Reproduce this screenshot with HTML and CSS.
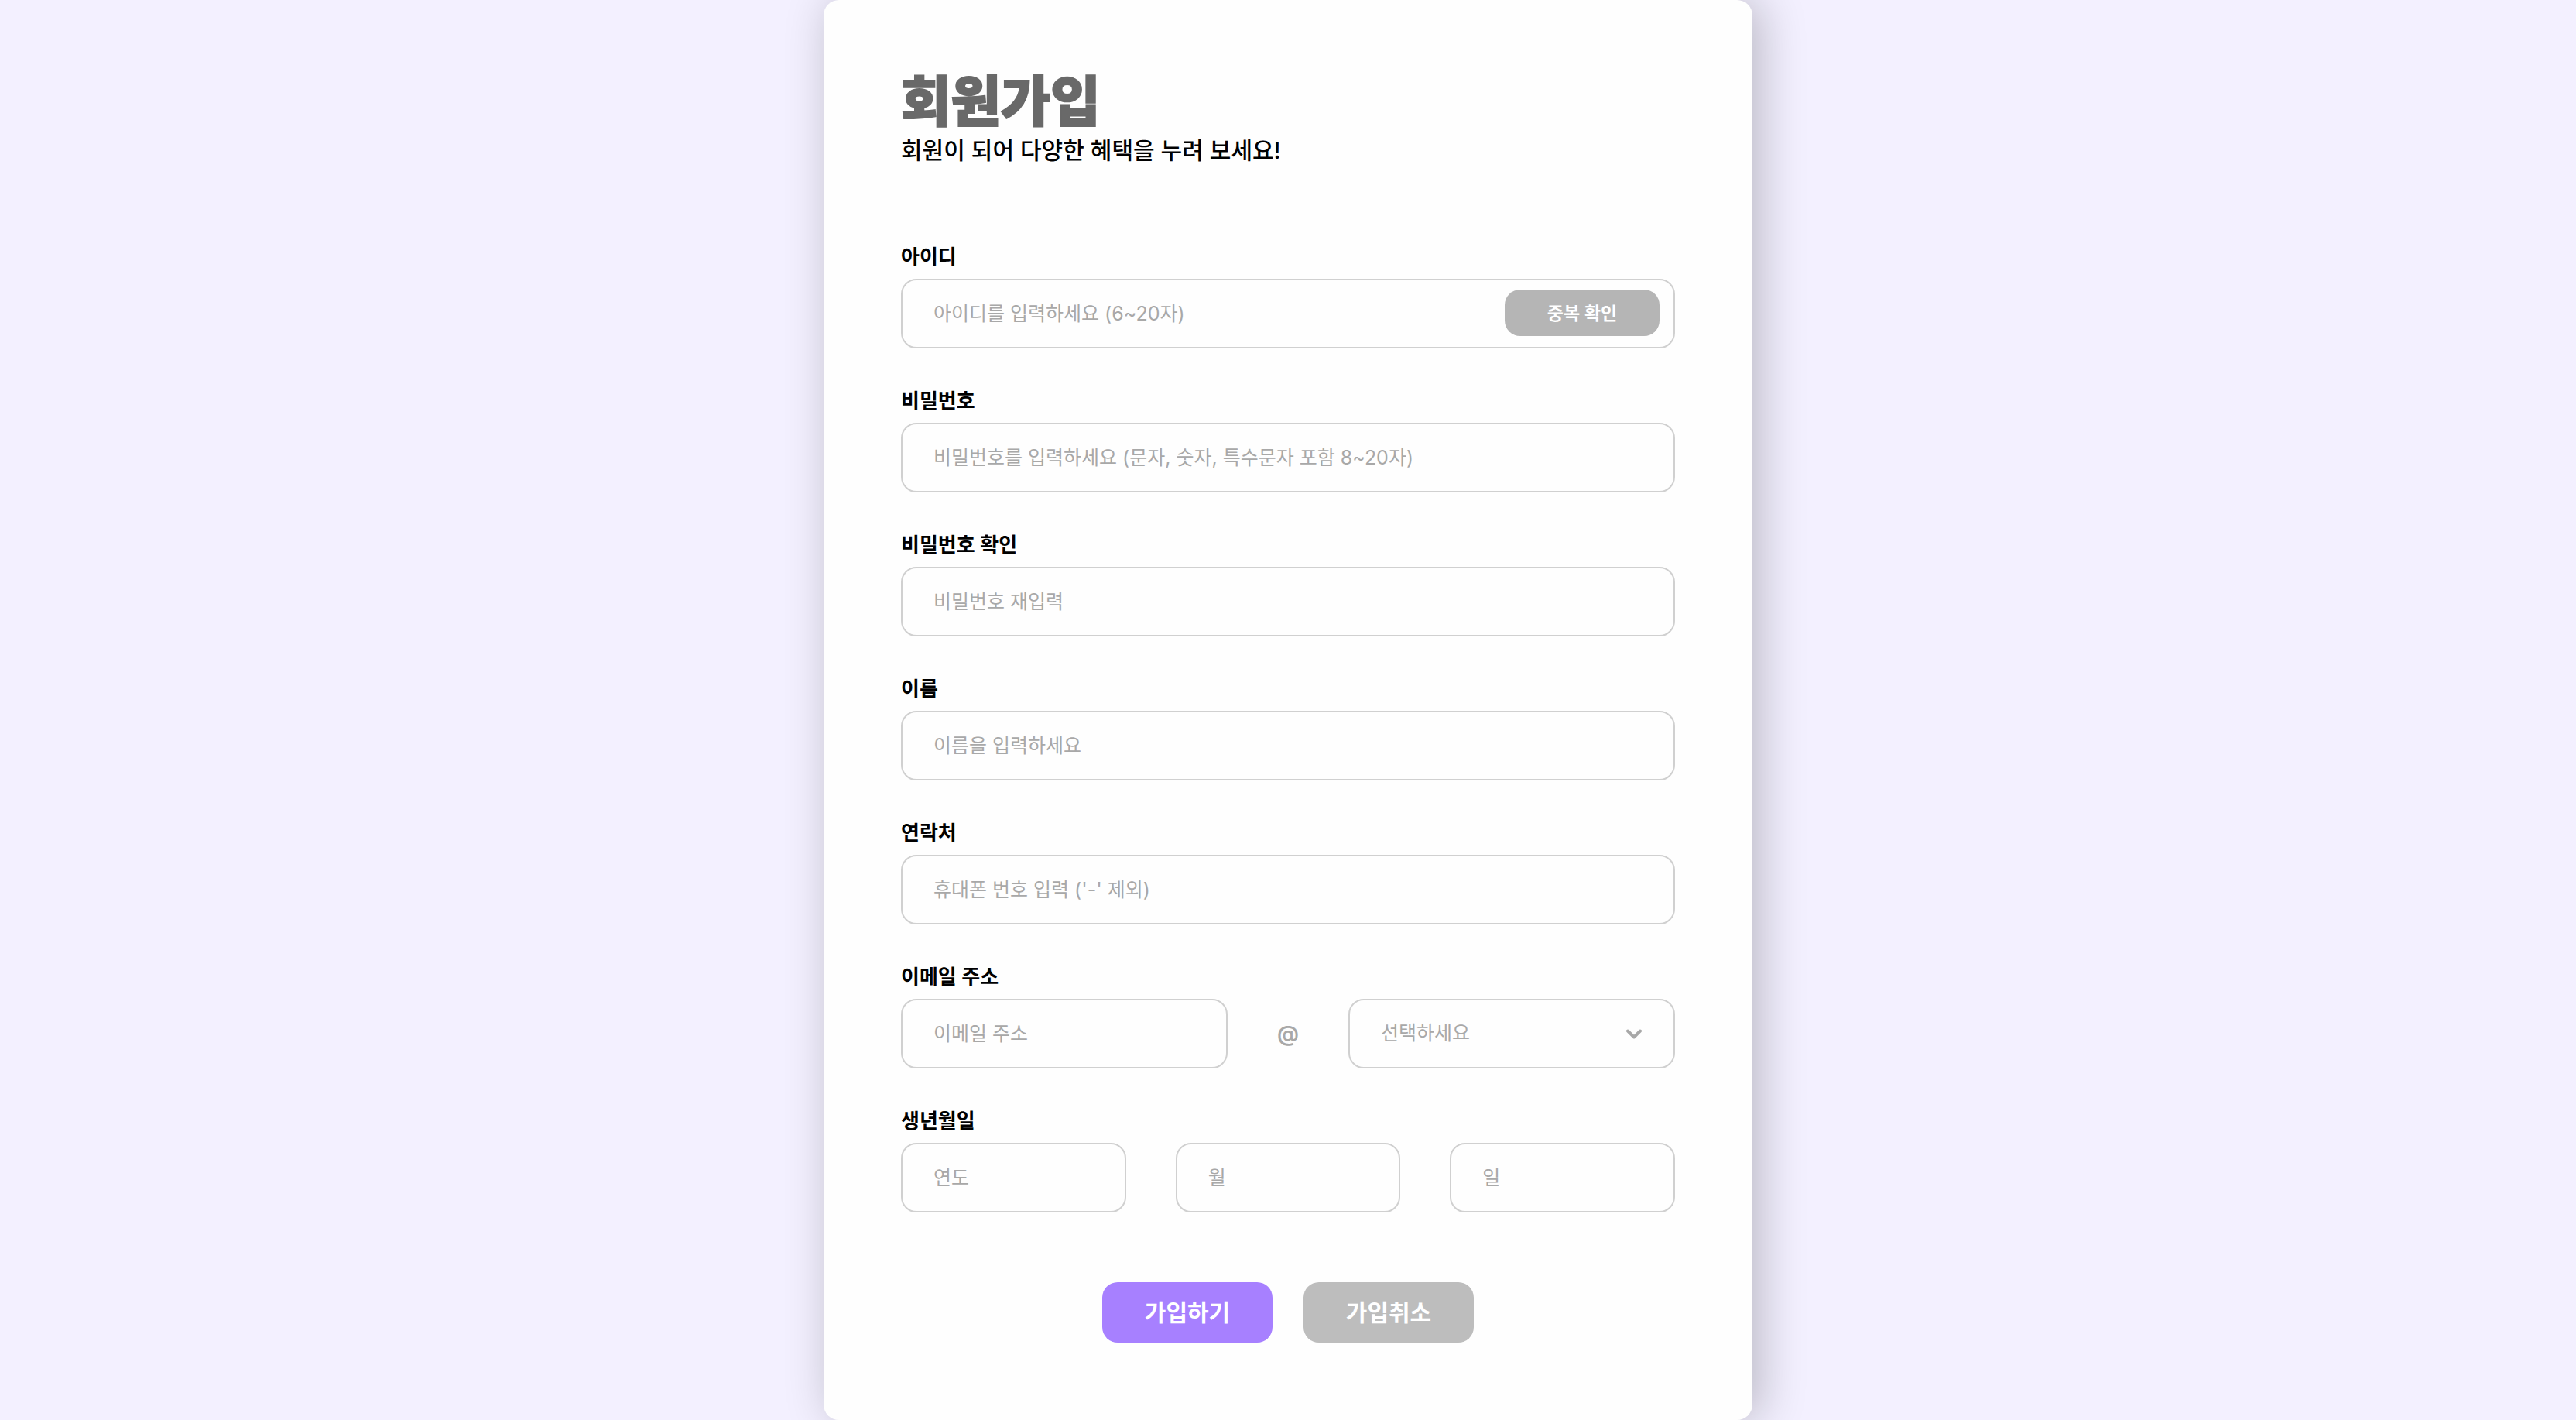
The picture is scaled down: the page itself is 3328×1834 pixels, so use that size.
FILE: index.html
```html
<!DOCTYPE html>
<html lang="ko">
<head>
<meta charset="UTF-8">
<meta name="viewport" content="width=device-width, initial-scale=1">
<title>회원가입</title>
<link rel="stylesheet" href="styles.css">
</head>
<body>
<main class="card">
  <header class="intro">
    <h1 class="title">회원가입</h1>
    <p class="subtitle">회원이 되어 다양한 혜택을 누려 보세요!</p>
  </header>
  <form class="form">
    <div class="field">
      <label class="label" for="user-id">아이디</label>
      <div class="control">
        <input class="input input-with-button" id="user-id" type="text" placeholder="아이디를 입력하세요 (6~20자)">
        <button class="check-button" type="button">중복 확인</button>
      </div>
    </div>
    <div class="field">
      <label class="label" for="password">비밀번호</label>
      <input class="input" id="password" type="password" placeholder="비밀번호를 입력하세요 (문자, 숫자, 특수문자 포함 8~20자)">
    </div>
    <div class="field">
      <label class="label" for="password-confirm">비밀번호 확인</label>
      <input class="input" id="password-confirm" type="password" placeholder="비밀번호 재입력">
    </div>
    <div class="field">
      <label class="label" for="name">이름</label>
      <input class="input" id="name" type="text" placeholder="이름을 입력하세요">
    </div>
    <div class="field">
      <label class="label" for="phone">연락처</label>
      <input class="input" id="phone" type="tel" placeholder="휴대폰 번호 입력 ('-' 제외)">
    </div>
    <div class="field">
      <label class="label" for="email">이메일 주소</label>
      <div class="email-row">
        <input class="input" id="email" type="text" placeholder="이메일 주소">
        <span class="at">@</span>
        <div class="control">
          <select class="input select" aria-label="이메일 도메인">
            <option>선택하세요</option>
          </select>
          <svg class="chevron" viewBox="0 0 20 14" aria-hidden="true"><path d="M2 2.5 10 10.5 18 2.5"/></svg>
        </div>
      </div>
    </div>
    <div class="field">
      <label class="label" for="year">생년월일</label>
      <div class="birth-row">
        <input class="input" id="year" type="text" placeholder="연도">
        <input class="input" type="text" placeholder="월" aria-label="월">
        <input class="input" type="text" placeholder="일" aria-label="일">
      </div>
    </div>
    <div class="actions">
      <button class="button button-primary" type="submit">가입하기</button>
      <button class="button button-cancel" type="button">가입취소</button>
    </div>
  </form>
</main>
</body>
</html>
```
FILE: styles.css
```css
* {
  box-sizing: border-box;
}

body {
  margin: 0;
  background: #f3f0ff;
  color: #000;
  font-family: "Inter", "Noto Sans CJK KR", sans-serif;
}

.card {
  max-width: 1200px;
  margin: 0 auto;
  padding: 92px 100px 100px;
  border-radius: 20px;
  background: #fefefe;
  box-shadow: 10px 0 60px rgba(0, 0, 0, 0.24);
}

.title {
  margin: 0;
  color: #696969;
  font-size: 70px;
  font-weight: 900;
  line-height: 80px;
  -webkit-text-stroke: 2px #696969;
}

.subtitle {
  margin: 0;
  font-size: 30px;
  font-weight: 500;
  line-height: 44px;
}

.form {
  display: flex;
  flex-direction: column;
  gap: 50px;
  margin-top: 98px;
}

.field {
  display: flex;
  flex-direction: column;
  gap: 10px;
}

.label {
  font-size: 26px;
  font-weight: 600;
  line-height: 36px;
}

.control {
  position: relative;
  min-width: 0;
}

.input {
  display: block;
  width: 100%;
  min-width: 0;
  height: 90px;
  padding: 0 40px;
  border: 2px solid #d0d0d0;
  border-radius: 20px;
  background: #fefefe;
  color: #000;
  font-family: inherit;
  font-size: 25px;
}

.input::placeholder {
  color: #a8a8a8;
}

.input-with-button {
  padding-right: 240px;
}

.check-button {
  position: absolute;
  top: 14px;
  right: 20px;
  width: 200px;
  height: 60px;
  padding: 0 0 2px;
  border: 0;
  border-radius: 20px;
  background: #b5b5b5;
  color: #fff;
  font-family: inherit;
  font-size: 23px;
  font-weight: 600;
}

.email-row {
  display: grid;
  grid-template-columns: 1fr 156px 1fr;
  align-items: center;
}

.at {
  color: #a8a8a8;
  font-size: 28px;
  font-weight: 600;
  text-align: center;
}

.select {
  padding-bottom: 2px;
  appearance: none;
  color: #a8a8a8;
}

.chevron {
  position: absolute;
  top: 39px;
  right: 43px;
  width: 20px;
  height: 14px;
  fill: none;
  stroke: #a8a8a8;
  stroke-width: 4;
  stroke-linecap: round;
  stroke-linejoin: round;
  pointer-events: none;
}

.birth-row {
  display: grid;
  grid-template-columns: repeat(3, 1fr);
  gap: 64px;
}

.actions {
  display: flex;
  justify-content: center;
  gap: 40px;
  margin-top: 40px;
}

.button {
  width: 220px;
  height: 78px;
  padding: 0 0 4px;
  border: 0;
  border-radius: 20px;
  color: #fff;
  font-family: inherit;
  font-size: 30px;
  font-weight: 600;
}

.button-primary {
  background: #a780ff;
}

.button-cancel {
  background: #bdbdbd;
}
```
